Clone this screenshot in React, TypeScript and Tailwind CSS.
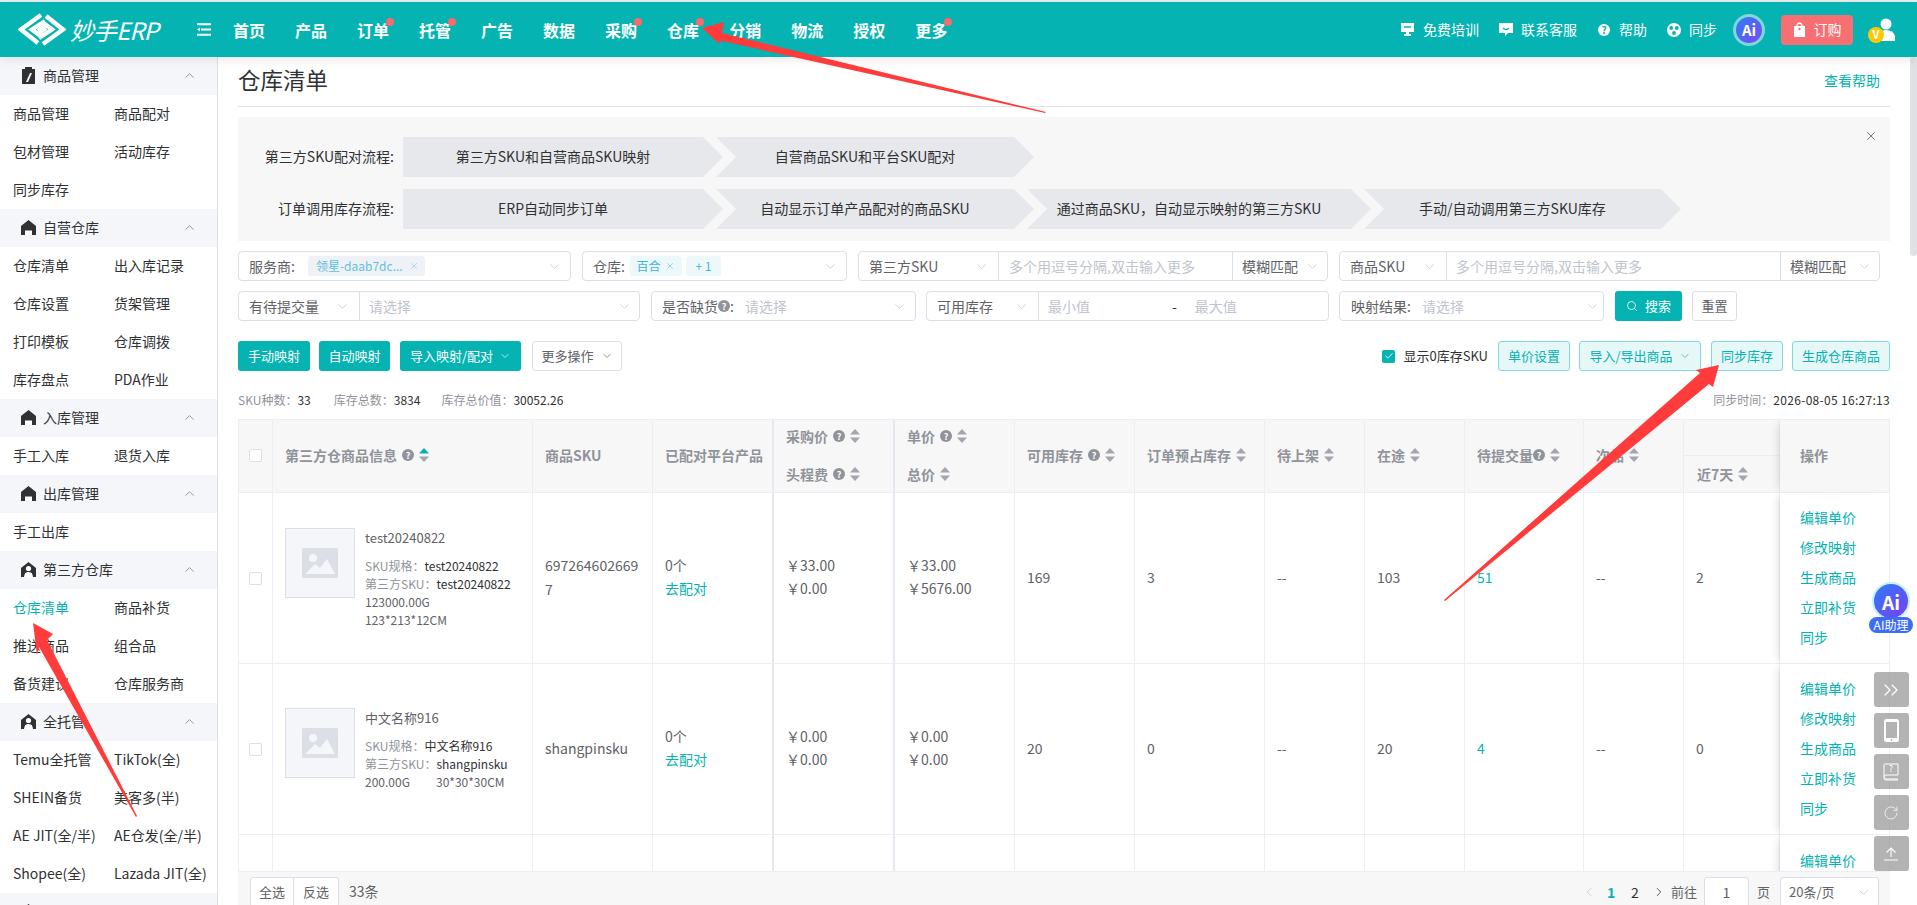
import React from "react";
import { ChevronDown, ChevronUp, ChevronLeft, ChevronRight, ChevronsRight, RotateCw, Search, X, Check } from "lucide-react";

const Sort = ({ active = false }: { active?: boolean }) => (
  <svg width="10" height="14" viewBox="0 0 10 14" className="ml-[5px] shrink-0">
    <path d="M5 0 L10 5.5 H0 Z" fill={active ? "#04b3b2" : "#a3a6ad"} />
    <path d="M5 14 L10 8.5 H0 Z" fill="#a3a6ad" />
  </svg>
);

const Help = ({ tight = false }: { tight?: boolean }) => (
  <span className={`inline-flex h-[12px] w-[12px] shrink-0 items-center justify-center rounded-full bg-[#909399] text-[9px] font-bold leading-none text-white ${tight ? "" : "ml-[5px]"}`}>?</span>
);

const Caret = ({ className = "" }: { className?: string }) => (
  <ChevronDown size={15} strokeWidth={1.2} className={`shrink-0 text-[#c0c4cc] ${className}`} />
);

const HouseIcon = ({ person = false }: { person?: boolean }) => (
  <svg width="17" height="17" viewBox="0 0 17 17" className="shrink-0">
    <path d="M8.5 1 L16 7 V16 H12 V12 H5 V16 H1 V7 Z" fill="#303133" />
    {person ? (
      <>
        <circle cx="8.5" cy="7.5" r="2.6" fill="#fff" />
        <path d="M4 16 Q4.5 11 8.5 11 Q12.5 11 13 16 Z" fill="#fff" />
      </>
    ) : (
      <path d="M5 16 V11.5 H12 V16 Z" fill="#fff" />
    )}
  </svg>
);

const ClipIcon = () => (
  <svg width="17" height="19" viewBox="0 0 17 19" className="shrink-0">
    <path d="M2 3 H5 V1 H12 V3 H15 V18 H2 Z" fill="#303133" />
    <path d="M12 7 L8 16 H6 L10 7 Z" fill="#fff" />
  </svg>
);

type Sec = { title: string; icon: "clip" | "house" | "person"; items: string[] };
const sections: Sec[] = [
  { title: "商品管理", icon: "clip", items: ["商品管理", "商品配对", "包材管理", "活动库存", "同步库存"] },
  { title: "自营仓库", icon: "house", items: ["仓库清单", "出入库记录", "仓库设置", "货架管理", "打印模板", "仓库调拨", "库存盘点", "PDA作业"] },
  { title: "入库管理", icon: "house", items: ["手工入库", "退货入库"] },
  { title: "出库管理", icon: "house", items: ["手工出库"] },
  { title: "第三方仓库", icon: "person", items: ["仓库清单", "商品补货", "推送商品", "组合品", "备货建议", "仓库服务商"] },
  { title: "全托管", icon: "person", items: ["Temu全托管", "TikTok(全)", "SHEIN备货", "美客多(半)", "AE JIT(全/半)", "AE仓发(全/半)", "Shopee(全)", "Lazada JIT(全)"] },
  { title: "", icon: "person", items: [] },
];

const Sidebar = () => (
  <aside className="h-[848px] w-[218px] shrink-0 overflow-hidden border-r border-[#dfe1e8] bg-white">
    {sections.map((s) => (
      <div key={s.title || "last"}>
        <div className="flex h-[38px] items-center bg-[#f5f6fa] pb-[2px] pl-[20px] pr-[20px] text-[14px] text-[#303133]">
          {s.icon === "clip" ? <ClipIcon /> : <HouseIcon person={s.icon === "person"} />}
          <span className="ml-[6px]">{s.title}</span>
          <ChevronUp size={15} strokeWidth={1.2} className="ml-auto text-[#777]" />
        </div>
        <div className="grid grid-cols-[101px_1fr] pl-[13px]">
          {s.items.map((it, i) => (
            <div key={i} className={`flex h-[38px] items-center whitespace-nowrap pb-[2px] text-[14px] ${s.title === "第三方仓库" && i === 0 ? "text-[#04b3b2]" : "text-[#303133]"}`}>
              {it}
            </div>
          ))}
        </div>
      </div>
    ))}
  </aside>
);

const Logo = () => (
  <svg width="48" height="35" viewBox="0 0 48 35" className="shrink-0">
    <g fill="none" stroke="#fff" strokeWidth="4.4">
      <path d="M23 3 L3 17.5 L20 31" />
      <path d="M27 9 L14 17.5 L20 22 L28 16" />
      <path d="M25 32 L45 17.5 L28 4" />
      <path d="M21 26 L34 17.5 L28 13 L20 19" />
    </g>
  </svg>
);

const navs: [string, boolean][] = [
  ["首页", false], ["产品", false], ["订单", true], ["托管", true], ["广告", false], ["数据", false],
  ["采购", true], ["仓库", true], ["分销", false], ["物流", false], ["授权", false], ["更多", true],
];

const TopBar = () => (
  <header className="relative z-10 flex h-[55px] items-center bg-[#04b3b2] pl-[18px] pr-[22px] shadow-[0_2px_10px_rgba(0,0,0,0.10)]">
    <Logo />
    <span className="ml-[4px] w-[126px] text-[24px] italic leading-none tracking-[-1px] text-white">妙手ERP</span>
    <svg width="15" height="13" viewBox="0 0 15 13" className="mr-[22px] shrink-0">
      <path d="M1 1.2 H15 M5 6.5 H15 M1 11.8 H15" stroke="#fff" strokeWidth="2" />
      <path d="M1 6.5 L4 4.5 V8.5 Z" fill="#fff" />
    </svg>
    <nav className="flex gap-[30px]">
      {navs.map(([n, dot]) => (
        <span key={n} className="relative h-[24px] text-[16px] font-bold leading-[24px] text-white">
          {n}
          {dot && <i className="absolute right-[-5px] top-0 h-[8px] w-[8px] rounded-full bg-[#f56c6c]" />}
        </span>
      ))}
    </nav>
    <div className="ml-auto flex items-center text-[14px] text-white">
      <svg width="13" height="15" viewBox="0 0 13 15" className="mr-[9px]"><path d="M0 1 H13 V10 H8 V12 H10 V14 H3 V12 H5 V10 H0 Z" fill="#fff" /><path d="M3 5 H10" stroke="#04b3b2" strokeWidth="1.5" /></svg>
      <span>免费培训</span>
      <svg width="14" height="15" viewBox="0 0 14 15" className="ml-[20px] mr-[8px]"><path d="M0 1 H14 V11 H9 L6 14 V11 H0 Z" fill="#fff" /><path d="M4 6 Q7 9 10 6" stroke="#04b3b2" strokeWidth="1.3" fill="none" /></svg>
      <span>联系客服</span>
      <span className="ml-[21px] mr-[9px] flex h-[12px] w-[12px] items-center justify-center rounded-full bg-white text-[10px] font-bold leading-none text-[#04b3b2]">?</span>
      <span>帮助</span>
      <svg width="14" height="14" viewBox="0 0 14 14" className="ml-[20px] mr-[8px]"><circle cx="7" cy="7" r="7" fill="#fff" /><circle cx="4.2" cy="5" r="1.9" fill="#04b3b2" /><circle cx="9.8" cy="5" r="1.9" fill="#04b3b2" /><circle cx="7" cy="10" r="1.9" fill="#04b3b2" /></svg>
      <span>同步</span>
      <div className="ml-[16px] flex h-[32px] w-[32px] items-center justify-center rounded-full border-[3px] border-[#7fd8d8] bg-[linear-gradient(135deg,#2f7bf5,#7a4df5)] text-[15px] font-bold leading-none text-white">Ai</div>
      <button className="ml-[16px] flex h-[30px] w-[72px] items-center justify-center gap-[8px] rounded-[4px] bg-[#f76f72] text-[14px] text-white">
        <svg width="13" height="15" viewBox="0 0 13 15"><path d="M1 4 H12 V15 H1 Z" fill="#fff" /><path d="M4 5 V3 Q6.5 -1 9 3 V5" stroke="#fff" strokeWidth="1.4" fill="none" /><circle cx="6.5" cy="7" r="1.2" fill="#f76f72" /></svg>
        订购
      </button>
      <div className="relative ml-[15px] h-[24px] w-[27px]">
        <svg width="18" height="23" viewBox="0 0 18 23" className="absolute right-0 top-0"><circle cx="9" cy="6" r="5.5" fill="#fff" /><path d="M0 23 V18 Q2 12 9 12 Q16 12 18 18 V23 Z" fill="#fff" /></svg>
        <span className="absolute bottom-[-1px] left-0 flex h-[16px] w-[16px] items-center justify-center rounded-full bg-[#ffc800] text-[11px] font-bold leading-none text-white">V</span>
      </div>
    </div>
  </header>
);

const Chev = ({ w, first, text }: { w: string; first?: boolean; text: string }) => (
  <div
    className={`flex h-[40px] shrink-0 items-center justify-center bg-[#e7e8ec] pb-[2px] pr-[20px] text-[14px] text-[#303133] ${w} ${
      first
        ? "[clip-path:polygon(0_0,calc(100%-20px)_0,100%_50%,calc(100%-20px)_100%,0_100%)]"
        : "ml-[-7px] [clip-path:polygon(0_0,calc(100%-20px)_0,100%_50%,calc(100%-20px)_100%,0_100%,20px_50%)]"
    }`}
  >
    {text}
  </div>
);

const Banner = () => (
  <section className="relative mt-[10px] flex h-[124px] flex-col gap-[12px] bg-[#f7f7f8] pt-[20px]">
    <div className="flex items-center">
      <div className="mr-[9px] w-[156px] pb-[2px] text-right text-[14px] text-[#303133]">第三方SKU配对流程:</div>
      <Chev w="w-[320px]" first text="第三方SKU和自营商品SKU映射" />
      <Chev w="w-[318px]" text="自营商品SKU和平台SKU配对" />
    </div>
    <div className="flex items-center">
      <div className="mr-[9px] w-[156px] pb-[2px] text-right text-[14px] text-[#303133]">订单调用库存流程:</div>
      <Chev w="w-[320px]" first text="ERP自动同步订单" />
      <Chev w="w-[318px]" text="自动显示订单产品配对的商品SKU" />
      <Chev w="w-[344px]" text="通过商品SKU，自动显示映射的第三方SKU" />
      <Chev w="w-[317px]" text="手动/自动调用第三方SKU库存" />
    </div>
    <X size={14} strokeWidth={1.2} className="absolute right-[12px] top-[12px] text-[#444]" />
  </section>
);

const Box = ({ w, children }: { w: string; children: React.ReactNode }) => (
  <div className={`flex h-[30px] shrink-0 items-center rounded-[4px] border border-[#dcdfe6] bg-white text-[14px] text-[#606266] ${w}`}>{children}</div>
);

const SelPart = ({ w, text }: { w: string; text: string }) => (
  <div className={`flex h-full shrink-0 items-center justify-between border-r border-[#dcdfe6] pl-[10px] pr-[9px] ${w}`}>
    <span className="whitespace-nowrap">{text}</span>
    <Caret />
  </div>
);

const Ph = ({ children, className = "" }: { children: React.ReactNode; className?: string }) => (
  <span className={`whitespace-nowrap text-[#c0c4cc] ${className}`}>{children}</span>
);

const Filters = () => (
  <section className="mt-[10px] flex flex-col gap-[10px]">
    <div className="flex gap-[11px]">
      <Box w="w-[333px]">
        <span className="ml-[10px] mr-[13px]">服务商:</span>
        <span className="flex h-[20px] w-[117px] items-center gap-[6px] rounded-[3px] bg-[#eef2f7] pl-[8px] text-[12px] text-[#62c0dc]">领星-daab7dc... <X size={10} strokeWidth={1.2} /></span>
        <Caret className="ml-auto mr-[8px]" />
      </Box>
      <Box w="w-[265px]">
        <span className="ml-[10px] mr-[5px]">仓库:</span>
        <span className="flex h-[20px] w-[52px] items-center justify-center gap-[5px] rounded-[3px] bg-[#edf8fb] text-[12px] text-[#3fb6d6]">百合 <X size={10} strokeWidth={1.2} /></span>
        <span className="ml-[4px] flex h-[20px] w-[35px] items-center justify-center rounded-[3px] bg-[#edf8fb] text-[12px] text-[#3fb6d6]">+ 1</span>
        <Caret className="ml-auto mr-[8px]" />
      </Box>
      <Box w="w-[470px]">
        <SelPart w="w-[140px]" text="第三方SKU" />
        <div className="flex h-full w-[234px] items-center border-r border-[#dcdfe6] pl-[10px]"><Ph>多个用逗号分隔,双击输入更多</Ph></div>
        <div className="flex flex-1 items-center justify-between pl-[9px] pr-[7px]"><span className="whitespace-nowrap">模糊匹配</span><Caret /></div>
      </Box>
      <Box w="w-[541px]">
        <SelPart w="w-[107px]" text="商品SKU" />
        <div className="flex h-full w-[334px] items-center border-r border-[#dcdfe6] pl-[9px]"><Ph>多个用逗号分隔,双击输入更多</Ph></div>
        <div className="flex flex-1 items-center justify-between pl-[9px] pr-[7px]"><span className="whitespace-nowrap">模糊匹配</span><Caret /></div>
      </Box>
    </div>
    <div className="flex">
      <Box w="w-[402px]">
        <SelPart w="w-[121px]" text="有待提交量" />
        <Ph className="ml-[9px]">请选择</Ph>
        <Caret className="ml-auto mr-[7px]" />
      </Box>
      <Box w="ml-[11px] w-[265px]">
        <span className="ml-[10px] flex items-center whitespace-nowrap text-[#606266]">是否缺货<Help tight />:</span>
        <Ph className="ml-[11px]">请选择</Ph>
        <Caret className="ml-auto mr-[8px]" />
      </Box>
      <Box w="ml-[10px] w-[403px]">
        <SelPart w="w-[112px]" text="可用库存" />
        <Ph className="ml-[9px]">最小值</Ph>
        <span className="ml-[82px] text-[#303133]">-</span>
        <Ph className="ml-[18px]">最大值</Ph>
      </Box>
      <Box w="ml-[10px] w-[265px]">
        <span className="ml-[11px] whitespace-nowrap">映射结果:</span>
        <Ph className="ml-[11px]">请选择</Ph>
        <Caret className="ml-auto mr-[3px]" />
      </Box>
      <button className="ml-[11px] flex h-[30px] w-[67px] items-center justify-center gap-[7px] rounded-[3px] bg-[#04b3b2] text-[13px] text-white">
        <Search size={12} strokeWidth={1.6} />搜索
      </button>
      <button className="ml-[10px] h-[30px] w-[45px] rounded-[3px] border border-[#dcdfe6] bg-white text-[13px] text-[#606266]">重置</button>
    </div>
  </section>
);

const Solid = ({ w, children }: { w: string; children: React.ReactNode }) => (
  <button className={`flex h-[30px] items-center justify-center gap-[6px] rounded-[3px] bg-[#04b3b2] text-[13px] text-white ${w}`}>{children}</button>
);
const Light = ({ w, children }: { w: string; children: React.ReactNode }) => (
  <button className={`flex h-[30px] items-center justify-center gap-[6px] rounded-[3px] border border-[#82d9d8] bg-[#e6f7f7] text-[13px] text-[#04b3b2] ${w}`}>{children}</button>
);

const Actions = () => (
  <div className="mt-[20px] flex h-[30px] items-center">
    <Solid w="w-[72px]">手动映射</Solid>
    <Solid w="ml-[9px] w-[71px]">自动映射</Solid>
    <Solid w="ml-[10px] w-[121px]">导入映射/配对 <ChevronDown size={12} strokeWidth={1.4} /></Solid>
    <button className="ml-[11px] flex h-[30px] w-[90px] items-center justify-center gap-[7px] rounded-[3px] border border-[#dcdfe6] bg-white text-[13px] text-[#606266]">更多操作 <ChevronDown size={12} strokeWidth={1.4} /></button>
    <span className="ml-auto flex h-[13px] w-[13px] items-center justify-center rounded-[2px] bg-[#04b3b2]"><Check size={10} strokeWidth={2} className="text-white" /></span>
    <span className="ml-[8px] whitespace-nowrap text-[13px] text-[#303133]">显示0库存SKU</span>
    <Light w="ml-[10px] w-[72px]">单价设置</Light>
    <Light w="ml-[9px] w-[122px]">导入/导出商品 <ChevronDown size={12} strokeWidth={1.4} /></Light>
    <Light w="ml-[10px] w-[72px]">同步库存</Light>
    <Light w="ml-[9px] w-[98px]">生成仓库商品</Light>
  </div>
);

const Stats = () => (
  <div className="flex h-[48px] items-center pt-[10px] text-[12px] text-[#909399]">
    <span>SKU种数：<b className="font-normal text-[#303133]">33</b></span>
    <span className="ml-[23px]">库存总数：<b className="font-normal text-[#303133]">3834</b></span>
    <span className="ml-[21px]">库存总价值：<b className="font-normal text-[#303133]">30052.26</b></span>
    <span className="ml-auto">同步时间：<b className="font-normal tracking-[0.3px] text-[#303133]">2026-08-05 16:27:13</b></span>
  </div>
);

const Cb = () => <span className="mx-auto block h-[13px] w-[13px] rounded-[2px] border border-[#dcdfe6] bg-white" />;

const ImgBox = () => (
  <div className="flex h-[70px] w-[70px] shrink-0 items-center justify-center border border-[#dcdfe6] bg-[#f5f6fa]">
    <svg width="36" height="30" viewBox="0 0 36 30"><rect width="36" height="30" rx="1" fill="#dcdfe6" /><circle cx="11" cy="10" r="4" fill="#f5f6fa" /><path d="M3 26 L13 16 L18 20 L25 11 L33 26 Z" fill="#f5f6fa" /></svg>
  </div>
);

const Ops = () => (
  <div className="flex flex-col text-[14px] leading-[30px] text-[#04b3b2]">
    {["编辑单价", "修改映射", "生成商品", "立即补货", "同步"].map((t) => <span key={t}>{t}</span>)}
  </div>
);

const thBase = "border-r border-b border-[#ebeef5] bg-[#f7f7f8] pl-[12px] pb-[2px] text-left text-[14px] font-semibold text-[#909399]";
const tdBase = "border-r border-b border-[#ebeef5] pl-[12px] pb-[2px] align-middle text-[14px] text-[#606266]";
const H = ({ text, help, tight, active }: { text: string; help?: boolean; tight?: boolean; active?: boolean }) => (
  <div className="flex items-center whitespace-nowrap">{text}{help && <Help tight={tight} />}<Sort active={active} /></div>
);

type Row = { sku: string; title: string; spec: string; third: string; extra: React.ReactNode; p1: string; p2: string; u1: string; u2: string; a: string; b: string; c: string; d: string; e: string; f: string; g: string };
const rows: Row[] = [
  {
    sku: "6972646026697", title: "test20240822", spec: "test20240822", third: "test20240822",
    extra: <><div>123000.00G</div><div>123*213*12CM</div></>,
    p1: "33.00", p2: "0.00", u1: "33.00", u2: "5676.00", a: "169", b: "3", c: "--", d: "103", e: "51", f: "--", g: "2",
  },
  {
    sku: "shangpinsku", title: "中文名称916", spec: "中文名称916", third: "shangpinsku",
    extra: <div className="flex"><span className="w-[71px]">200.00G</span><span>30*30*30CM</span></div>,
    p1: "0.00", p2: "0.00", u1: "0.00", u2: "0.00", a: "20", b: "0", c: "--", d: "20", e: "4", f: "--", g: "0",
  },
];

const opShadow = "shadow-[-6px_0_8px_-4px_rgba(0,0,0,0.12)] bg-white";

const Table = () => (
  <div className="h-[452px] overflow-hidden border-l border-t border-[#ebeef5]">
    <table className="w-[1651px] table-fixed border-separate border-spacing-0">
      <colgroup>
        {[34, 260, 120, 121, 121, 120, 120, 130, 100, 100, 119, 100, 96, 110].map((w, i) => <col key={i} style={{ width: w }} />)}
      </colgroup>
      <thead>
        <tr className="h-[73px]">
          <th className={`${thBase} !pl-0`}><Cb /></th>
          <th className={thBase}><H text="第三方仓商品信息" help active /></th>
          <th className={thBase}>商品SKU</th>
          <th className={`${thBase} border-r-2 border-r-[#e6e8f0]`}>已配对平台产品</th>
          <th className={`${thBase} border-r-2 border-r-[#e6e8f0]`}>
            <div className="flex flex-col gap-[17px]"><H text="采购价" help /><H text="头程费" help /></div>
          </th>
          <th className={thBase}>
            <div className="flex flex-col gap-[17px]"><H text="单价" help /><H text="总价" /></div>
          </th>
          <th className={thBase}><H text="可用库存" help /></th>
          <th className={thBase}><H text="订单预占库存" /></th>
          <th className={thBase}><H text="待上架" /></th>
          <th className={thBase}><H text="在途" /></th>
          <th className={thBase}><H text="待提交量" help tight /></th>
          <th className={thBase}><H text="次品" /></th>
          <th className={`${thBase} !pb-0 !pl-0`}>
            <div className="h-[36px] border-b border-[#ebeef5]" />
            <div className="flex h-[36px] items-center pl-[13px]"><H text="近7天" /></div>
          </th>
          <th className={`${thBase} !pl-[20px] shadow-[-6px_0_8px_-4px_rgba(0,0,0,0.12)]`}>操作</th>
        </tr>
      </thead>
      <tbody>
        {rows.map((r) => (
          <tr key={r.sku} className="h-[171px]">
            <td className={`${tdBase} !pb-0 !pl-0`}><Cb /></td>
            <td className={`${tdBase} !pb-0`}>
              <div className="flex items-start">
                <ImgBox />
                <div className="ml-[10px] pt-[1px]">
                  <div className="text-[13px] leading-[18px] text-[#606266]">{r.title}</div>
                  <div className="mt-[10px] text-[12px] leading-[18px] text-[#606266]">
                    <div><span className="text-[#909399]">SKU规格：</span><span className="text-[#303133]">{r.spec}</span></div>
                    <div><span className="text-[#909399]">第三方SKU：</span><span className="text-[#303133]">{r.third}</span></div>
                    {r.extra}
                  </div>
                </div>
              </div>
            </td>
            <td className={`${tdBase} break-all pr-[12px] leading-[24px]`}>{r.sku}</td>
            <td className={`${tdBase} border-r-2 border-r-[#e6e8f0] leading-[23px]`}><div>0个</div><div className="text-[#04b3b2]">去配对</div></td>
            <td className={`${tdBase} border-r-2 border-r-[#e6e8f0] leading-[23px]`}><div>￥{r.p1}</div><div>￥{r.p2}</div></td>
            <td className={`${tdBase} leading-[23px]`}><div>￥{r.u1}</div><div>￥{r.u2}</div></td>
            <td className={tdBase}>{r.a}</td>
            <td className={tdBase}>{r.b}</td>
            <td className={tdBase}>{r.c}</td>
            <td className={tdBase}>{r.d}</td>
            <td className={tdBase}><span className="text-[#04b3b2]">{r.e}</span></td>
            <td className={tdBase}>{r.f}</td>
            <td className={tdBase}>{r.g}</td>
            <td className={`${tdBase} !pl-[20px] ${opShadow}`}><Ops /></td>
          </tr>
        ))}
        <tr className="h-[171px]">
          {Array.from({ length: 13 }).map((_, i) => (
            <td key={i} className={`${tdBase} ${i === 3 || i === 4 ? "border-r-2 border-r-[#e6e8f0]" : ""}`} />
          ))}
          <td className={`${tdBase} !pl-[20px] !align-top pt-[10px] leading-[30px] text-[#04b3b2] ${opShadow}`}><span className="text-[#04b3b2]">编辑单价</span></td>
        </tr>
      </tbody>
    </table>
  </div>
);

const Pager = () => (
  <div className="flex h-[34px] items-start overflow-hidden border-t border-[#ebeef5] bg-[#f7f7f8] pl-[12px] pt-[5px] text-[14px] text-[#606266]">
    <div className="flex h-[30px] rounded-[3px] border border-[#dcdfe6] bg-white text-[13px]">
      <span className="flex w-[43px] items-center justify-center border-r border-[#dcdfe6]">全选</span>
      <span className="flex w-[44px] items-center justify-center">反选</span>
    </div>
    <span className="ml-[10px] mt-[4px]">33条</span>
    <div className="ml-auto flex items-center pr-[11px]">
      <ChevronLeft size={14} strokeWidth={1.4} className="text-[#c0c4cc]" />
      <span className="ml-[11px] w-[8px] font-bold text-[#04b3b2]">1</span>
      <span className="ml-[16px] w-[8px] text-[#303133]">2</span>
      <ChevronRight size={14} strokeWidth={1.4} className="ml-[13px] text-[#303133]" />
      <span className="ml-[5px] text-[13px]">前往</span>
      <span className="ml-[7px] flex h-[30px] w-[45px] items-center justify-center rounded-[3px] border border-[#dcdfe6] bg-white">1</span>
      <span className="ml-[8px] text-[13px]">页</span>
      <span className="ml-[10px] flex h-[30px] w-[99px] items-center justify-between rounded-[3px] border border-[#dcdfe6] bg-white pl-[8px] pr-[7px] text-[13px]">20条/页<Caret /></span>
    </div>
  </div>
);

const Floating = () => (
  <div className="absolute right-[2px] top-[582px] z-40 flex w-[48px] flex-col items-center">
    <div className="flex h-[38px] w-[38px] items-center justify-center rounded-full border-[2px] border-[#bdf2f6] bg-[linear-gradient(135deg,#2f7bf5,#7a3df5)] text-[19px] font-bold leading-none text-white">Ai</div>
    <div className="mt-[-3px] flex h-[16px] w-[44px] items-center justify-center rounded-full bg-[#3d6cf7] text-[12px] leading-none text-white">AI助理</div>
    <div className="mt-[39px] flex flex-col gap-[6px]">
      {[0, 1, 2, 3, 4].map((i) => (
        <div key={i} className="flex h-[35px] w-[35px] items-center justify-center rounded-[3px] bg-[rgba(150,150,150,0.72)] text-white">
          {i === 0 && <ChevronsRight size={24} strokeWidth={1.2} />}
          {i === 1 && <svg width="15" height="23" viewBox="0 0 15 23"><rect width="15" height="23" rx="2.5" fill="#fff" /><rect x="2" y="3" width="11" height="16" fill="#b3b3b3" /><circle cx="7.5" cy="21" r="0.9" fill="#b3b3b3" /></svg>}
          {i === 2 && <svg width="16" height="18" viewBox="0 0 16 18" fill="none" stroke="#fff" strokeWidth="1"><path d="M1 14 V2 Q1 1 2 1 H15 V12 H3 Q1 12 1 14 Q1 16 3 16 H15" /><path d="M1 15 Q1 17 3 17 H15" /><text x="8" y="9" fontSize="9" fill="#fff" stroke="none" textAnchor="middle">?</text></svg>}
          {i === 3 && <RotateCw size={16} strokeWidth={1.1} />}
          {i === 4 && <svg width="14" height="14" viewBox="0 0 14 14" fill="none" stroke="#fff" strokeWidth="1.1"><path d="M0 13 H14 M7 10 V1 M2.5 5.5 L7 1 L11.5 5.5" /></svg>}
        </div>
      ))}
    </div>
  </div>
);

const Arrows = () => (
  <svg className="pointer-events-none absolute left-0 top-0 z-30" width="1917" height="905" viewBox="0 0 1917 905">
    <g fill="#ff3b3b">
      <polygon points="702,28 724,22 722,33 1046,112 1045,113 722,41 718,43" />
      <polygon points="1719,365 1696,370 1700,373 1444,600 1445,601 1709,384 1713,387" />
      <polygon points="33,623 53,634 47,640 137,816 136,817 39,647 37,655" />
    </g>
  </svg>
);

export default function App() {
  return (
    <div className="relative h-[905px] w-[1917px] overflow-hidden bg-white font-['Noto_Sans_CJK_SC',sans-serif]">
      <div className="h-[2px] bg-[#eeeeee]" />
      <TopBar />
      <div className="flex h-[848px]">
        <Sidebar />
        <main className="ml-[20px] w-[1652px] shrink-0">
          <div className="flex h-[50px] items-center justify-between border-b border-[#dfe1e8] pb-[2px] pr-[10px]">
            <h1 className="mb-[2px] text-[22.5px] font-normal text-[#303133]">仓库清单</h1>
            <a className="text-[14px] text-[#04b3b2]">查看帮助</a>
          </div>
          <Banner />
          <Filters />
          <Actions />
          <Stats />
          <Table />
          <Pager />
        </main>
        <div className="ml-auto w-[7px] shrink-0">
          <div className="h-[199px] rounded-[4px] bg-[#dfe1e5]" />
        </div>
      </div>
      <Floating />
      <Arrows />
    </div>
  );
}
